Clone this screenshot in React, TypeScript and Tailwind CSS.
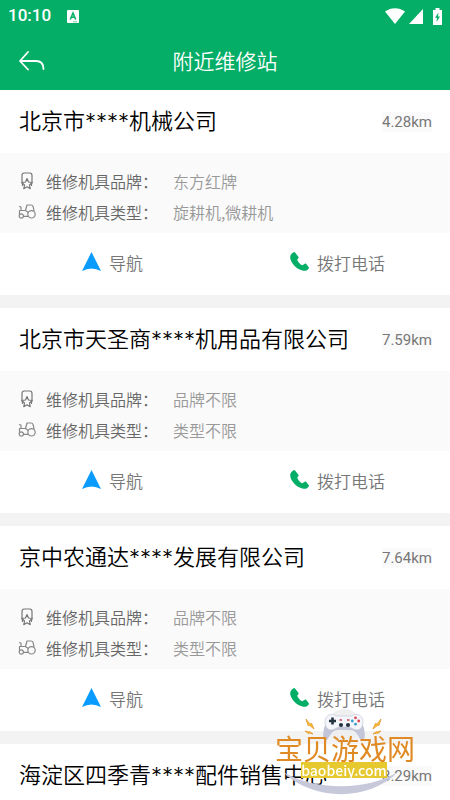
import type { ReactNode } from 'react';

interface Station {
  name: string;
  distance: string;
  brand?: string;
  type?: string;
}

const stations: Station[] = [
  { name: '北京市****机械公司', distance: '4.28km', brand: '东方红牌', type: '旋耕机,微耕机' },
  { name: '北京市天圣商****机用品有限公司', distance: '7.59km', brand: '品牌不限', type: '类型不限' },
  { name: '京中农通达****发展有限公司', distance: '7.64km', brand: '品牌不限', type: '类型不限' },
  { name: '海淀区四季青****配件销售中心', distance: '8.29km' },
];

function StatusBar() {
  return (
    <div className="flex h-8 items-center justify-between pr-2 pl-2">
      <div className="flex items-center gap-4">
        <span className="font-['Roboto',sans-serif] text-[17px] font-medium text-white">10:10</span>
        <svg width="12" height="13" viewBox="0 0 12 13">
          <rect width="12" height="13" rx="1" fill="#fff" />
          <path d="M3.3 9.5 6 3l2.7 6.5M4.3 7.3h3.4" fill="none" stroke="#04ae66" strokeWidth="1.5" />
          <path d="M6 11.8h4" stroke="#04ae66" strokeWidth=".6" />
        </svg>
      </div>
      <div className="flex items-center">
        <svg width="20" height="16" viewBox="0 0 20 16" fill="#fff">
          <path d="M0 3.5C6-1 14-1 20 3.5L10 16Z" />
        </svg>
        <svg className="ml-1" width="14" height="15" viewBox="0 0 14 15" fill="#fff">
          <path d="M14 0v15H0Z" />
        </svg>
        <svg className="ml-2.5" width="9" height="17" viewBox="0 0 9 17">
          <path d="M2.5 0h4v2H9v15H0V2h2.5Z" fill="#fff" />
          <path d="M5.5 4.5 2 9.7h2L3.5 14 7 8.5H5Z" fill="#04ae66" />
        </svg>
      </div>
    </div>
  );
}

function MedalIcon() {
  return (
    <svg width="18" height="18" viewBox="0 0 18 18" fill="none" stroke="#777" strokeWidth="1.2" strokeLinecap="round" strokeLinejoin="round">
      <path d="M4.5 13.5V12C4 11.5 4 11 4 10V3.500C4 2 4.700 1 6.200 1h5.600C13.300 1 14 2 14 3.500V10c0 1 0 1.500-.5 2v1.500" />
      <path d="m9 6.500 1.500 3.500 3.700.5-2.700 2.500.7 3.700L9 14.800l-3.200 1.900.7-3.700-2.700-2.500 3.700-.5Z" fill="#fafafa" />
    </svg>
  );
}

function TractorIcon() {
  return (
    <svg width="18" height="18" viewBox="0 0 18 18" fill="none" stroke="#888" strokeWidth="1.2" strokeLinecap="round" strokeLinejoin="round">
      <circle cx="13.500" cy="11.300" r="3.700" />
      <circle cx="3.300" cy="13" r="2.100" />
      <path d="M1.500 11V7.500h6L9 2h4c1.300 0 1.800.5 2.100 1.700l.9 4M3 7.300V4.300L1.600 3.500M5.500 13.300H10.500M7.500 7.500l2.800 2" />
    </svg>
  );
}

function DetailRow({ icon, label, value }: { icon: ReactNode; label: string; value?: string }) {
  return (
    <div className="flex h-[31px] items-center text-[16px]">
      {icon}
      <dt className="ml-2.5 w-[127px] text-[#666]">{label}：</dt>
      <dd className="text-[#999]">{value}</dd>
    </div>
  );
}

function StationCard({ station }: { station: Station }) {
  return (
    <article className="bg-white">
      <div className="flex h-[63px] items-center justify-between pr-[18px] pl-[19px]">
        <h2 className="font-['Inter','Noto_Sans_CJK_SC',sans-serif] text-[22px] text-black">{station.name}</h2>
        <span className="bg-[#fafafa] font-['Roboto',sans-serif] text-[15px] leading-5 font-normal text-[#777]">
          {station.distance}
        </span>
      </div>
      {station.brand && (
        <>
          <dl className="bg-[#fafafa] px-[18px] pt-3 pb-1.5">
            <DetailRow icon={<MedalIcon />} label="维修机具品牌" value={station.brand} />
            <DetailRow icon={<TractorIcon />} label="维修机具类型" value={station.type} />
          </dl>
          <div className="grid h-[62px] grid-cols-2 pb-0.5 text-[17px] text-[#777]">
            <button className="flex items-center justify-center gap-2">
              <svg className="mb-1" width="19" height="19" viewBox="0 0 19 19" fill="#0a9bff">
                <path d="m9.500 0 9.500 19q-9.500-5-19 0Z" />
              </svg>
              导航
            </button>
            <button className="flex items-center justify-center gap-2">
              <svg className="mb-1" width="19" height="19" viewBox="0 0 20 20" fill="#04ae66">
                <path d="M3.800.3C1.500 1.500.1 3.500.2 6c.3 5 6.500 12 13 13.600 3 .7 5.700-.6 6.600-2.600.2-.5.2-.9-.2-1.300l-2.500-3.200c-.4-.5-1-.5-1.500-.2l-2.600 1.700c-2.300-1-4.600-3.400-5.400-5.900l1.300-1.900c.3-.5.2-.9-.1-1.300L5.300.6Q4.700-.2 3.800.3Z" />
              </svg>
              拨打电话
            </button>
          </div>
          <div className="h-[13px] bg-[#f3f3f3]" />
        </>
      )}
    </article>
  );
}

function SiteMark() {
  return (
    <div className="pointer-events-none fixed right-[34px] bottom-1 flex w-[142px] flex-col items-center font-normal">
      <svg className="absolute bottom-0" width="142" height="88" viewBox="0 0 142 88">
        <circle cx="70" cy="18" r="17" fill="#efefef" />
        <path d="M52 15C49 21 48 31 51 32c3 1 4-4 6-6 2-3 4-4 7-4h12c3 0 5 1 7 4 2 2 3 7 6 6 3-1 2-11-1-17Z" fill="#c3c5d8" />
        <path d="M55 7c2-1 5-1 7 1h16c2-2 5-2 7-1 3 1 4 4 4 7 0 4-2 8-6 8-3 0-5-2-8-3H65c-3 1-5 3-8 3-4 0-6-4-6-8 0-3 1-6 4-7Z" fill="#f5f6fc" stroke="#c0c2d2" strokeWidth=".6" />
        <path d="M58.500 9.500v7M55 13h7" stroke="#263340" strokeWidth="2.600" />
        <g fill="#263340">
          <circle cx="67" cy="17" r="2.100" />
          <circle cx="74" cy="17" r="2.100" />
        </g>
        <path d="M65.500 12h2.500M73 12h2.500" stroke="#c8434e" strokeWidth="1.400" />
        <g fill="#db4752">
          <circle cx="81.500" cy="9.800" r="1.400" />
          <circle cx="84.700" cy="13" r="1.400" />
        </g>
        <g fill="#359fc7">
          <circle cx="78.300" cy="13" r="1.400" />
          <circle cx="81.500" cy="16.200" r="1.400" />
        </g>
        <g fill="#f6c434" stroke="#e18b20" strokeWidth=".7" strokeLinejoin="round">
          <path d="m32 11 4 5 1.500-.7L40 21l-5-4-1 .5ZM107 11l-4 5-1.500-.7L99 21l5-4 1 .5Z" />
          <path d="m31 23 4 1 .5-.5 3.500 2.500-4-1-.5.700ZM107 23l-4 1-.5-.5L99 26l4-1 .5.700Z" />
        </g>
        <path d="M9 64C42 83 92 83 124 64 94 94 39 93 9 64Z" fill="#c7c8da" />
      </svg>
      <div className="relative text-[28px] leading-7 whitespace-nowrap text-[#e08a25]">宝贝游戏网</div>
      <div className="relative mr-[2px] mb-[18px] flex h-4 w-[86px] items-center justify-center bg-[#e6c92e] text-[14px] leading-4 font-medium text-white">
        baobeiy.com
      </div>
    </div>
  );
}

export default function App() {
  return (
    <div className="bg-white font-['Noto_Sans_CJK_SC',sans-serif] font-[350]">
      <header className="bg-[#04ae66]">
        <StatusBar />
        <div className="grid h-[58px] grid-cols-[60px_1fr_60px] items-center">
          <button aria-label="返回" className="pl-[19px]">
            <svg width="26" height="20" viewBox="0 0 26 20" fill="none" stroke="#fff" strokeWidth="1.800" strokeLinecap="round" strokeLinejoin="round">
              <path d="M9 1 1 10l8 8.500M1 10h16c5 0 7.500 3 7.500 8" />
            </svg>
          </button>
          <h1 className="text-center text-[21px] font-[350] text-white">附近维修站</h1>
        </div>
      </header>
      <main>
        {stations.map((station) => (
          <StationCard key={station.name} station={station} />
        ))}
      </main>
      <SiteMark />
    </div>
  );
}
